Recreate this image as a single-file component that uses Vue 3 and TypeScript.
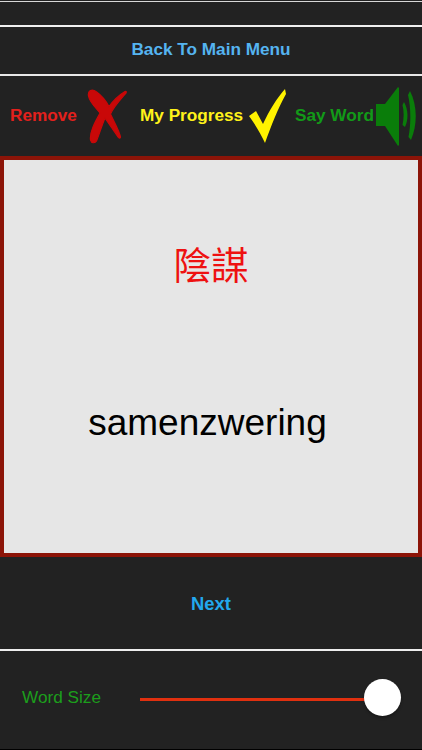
<script setup lang="ts">
const title = '陰謀'
const word = 'samenzwering'
</script>

<template>
  <div class="screen">
    <div class="topbar"></div>
    <div class="nav">Back To Main Menu</div>
    <div class="actions">
      <div class="action remove">
        <span>Remove</span>
        <svg width="40" height="56" viewBox="86 90 40 56" aria-hidden="true">
          <path fill="#c90808" stroke="#c90808" stroke-width="1.2" stroke-linejoin="round" d="M87.500 98C86.500 92.500 91 90.500 95 93.500C100 97 105 103 108 108.500C112 103 119 96.500 124 93.500C125.500 93 125.500 94 125 95C120 101 113 108 109.500 116C112.500 123 118 132 119.500 139C119.500 140.500 118 140.500 117 139C113 133 108 126 104 120C101 127 98 137 95.500 143C94 145.500 90.500 145.500 89.500 142C88.500 134 94 124 99 115C95 110 88.500 104 87.500 98Z" />
        </svg>
      </div>
      <div class="action progress">
        <span>My Progress</span>
        <svg width="38" height="55" viewBox="247 87 38 55" aria-hidden="true">
          <path fill="#fff200" d="M248 114L255 109L262 122C268 109 276 96 284 87L285 92C277 106 270 124 264 141C260 132 254 122 248 114Z" />
        </svg>
      </div>
      <div class="action say">
        <span>Say Word</span>
        <svg width="40" height="60" viewBox="376 86 40 60" aria-hidden="true">
          <path fill="#0a7d0a" d="M376 104H385L398 87L399 88V145L398 146L385 126H376Z" />
          <path fill="#0a7d0a" d="M404 102C408.500 110 408.500 120 405 127L402.500 125C404 118 404 111 402.500 105Z" />
          <path fill="#0a7d0a" d="M410 91C417.500 105 417.500 125 411 140L408.500 137C411 125 411 107 408 95Z" />
        </svg>
      </div>
    </div>
    <main class="card">
      <div class="title">{{ title }}</div>
      <div class="word">{{ word }}</div>
    </main>
    <div class="next">Next</div>
    <div class="size">
      <span class="label">Word Size</span>
      <div class="track"></div>
      <div class="thumb"></div>
    </div>
  </div>
</template>

<style>
html, body { margin: 0; background: #222; }
</style>

<style scoped>
.screen {
  width: 422px;
  height: 750px;
  box-sizing: border-box;
  background: #222222;
  display: flex;
  flex-direction: column;
  overflow: hidden;
  font-family: "Liberation Sans", Arial, sans-serif;
  border-bottom: 1px solid #000;
}
.topbar {
  height: 25px;
  flex: none;
  background: linear-gradient(#222 0 1px, #d8d8d8 1px 2px, #222 2px);
}
.nav {
  height: 45px;
  flex: none;
  border-top: 2px solid #f0f0f0;
  border-bottom: 2px solid #e8e8e8;
  display: flex;
  align-items: center;
  justify-content: center;
  padding-bottom: 2px;
  font-weight: 700;
  font-size: 17.2px;
  color: #55b4f0;
}
.actions {
  height: 80px;
  flex: none;
  display: flex;
  align-items: center;
  padding-left: 10px;
  font-weight: 700;
  font-size: 17.2px;
}
.action {
  display: flex;
  align-items: center;
}
.action span { padding-bottom: 2px; }
.action svg { display: block; flex: none; }
.remove { color: #e3201c; width: 130px; gap: 10px; }
.progress { color: #fff21a; width: 155px; gap: 5px; }
.say { color: #129a18; gap: 2px; }
.card {
  height: 401px;
  flex: none;
  box-sizing: border-box;
  background: #e6e6e6;
  border: 4px solid #8c1408;
  display: flex;
  flex-direction: column;
  align-items: center;
}
.title {
  margin-top: 81px;
  font-family: "Liberation Sans", "Noto Sans CJK TC", sans-serif;
  font-size: 37.5px;
  line-height: 50px;
  color: #ee1111;
}
.word {
  margin-top: 111px;
  padding-right: 7px;
  font-size: 37px;
  line-height: 42px;
  color: #000;
}
.next {
  flex: none;
  display: flex;
  align-items: center;
  justify-content: center;
  font-weight: 700;
  font-size: 18.4px;
  color: #22a8ee;
  border-bottom: 2px solid #eeeeee;
  box-sizing: border-box;
  height: 94px;
  padding-top: 1px;
}
.size {
  flex: 1;
  display: flex;
  align-items: center;
  padding: 0 21px 5px 22px;
}
.label {
  width: 118px;
  flex: none;
  font-size: 17.2px;
  color: #1c9e1c;
}
.track {
  flex: 1;
  height: 3px;
  margin-top: 3px;
  margin-right: -2px;
  background: #e0300f;
}
.thumb {
  width: 37px;
  height: 37px;
  flex: none;
  border-radius: 50%;
  background: #fff;
  box-shadow: 0 2px 3px rgba(0, 0, 0, 0.3);
}
</style>
